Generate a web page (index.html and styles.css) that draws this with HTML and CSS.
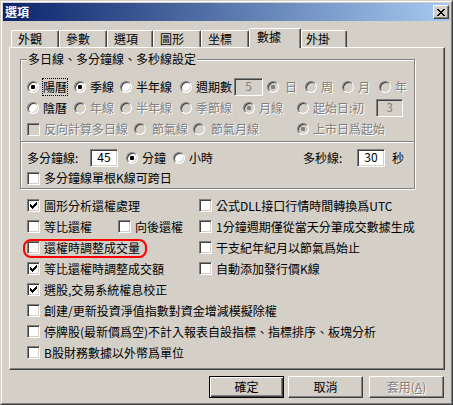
FILE: index.html
```html
<!DOCTYPE html>
<html lang="zh-Hant">
<head>
<meta charset="utf-8">
<title>選項</title>
<link rel="stylesheet" href="styles.css">
</head>
<body>
<div class="window">
  <div class="frame">
    <div class="titlebar">
      <span class="title">選項</span>
      <span class="close"><svg width="8" height="7" viewBox="0 0 8 7"><path fill="#000" d="M0 0h2v1H0zM6 0h2v1H6zM1 1h2v1H1zM5 1h2v1H5zM2 2h4v1H2zM3 3h2v1H3zM2 4h4v1H2zM1 5h2v1H1zM5 5h2v1H5zM0 6h2v1H0zM6 6h2v1H6z"/></svg></span>
    </div>

    <div class="tabs">
      <div class="tab t1">外觀</div>
      <div class="tab t2">參數</div>
      <div class="tab t3">選項</div>
      <div class="tab t4">圖形</div>
      <div class="tab t5">坐標</div>
      <div class="tab t6 sel">數據</div>
      <div class="tab t7">外掛</div>
    </div>

    <div class="panel">
      <fieldset class="group1">
        <legend>多日線、多分鐘線、多秒線設定</legend>
        <div class="row r21">
          <span class="opt w47"><i class="rb on"></i><span class="focus">陽曆</span></span>
          <span class="opt w46"><i class="rb on"></i><span>季線</span></span>
          <span class="opt w60"><i class="rb"></i><span>半年線</span></span>
          <span class="opt w54"><i class="rb"></i><span>週期數</span></span>
          <span class="field w29 dis gap4">5</span>
          <span class="opt w38 dis"><i class="rb on"></i><span class="far">日</span></span>
          <span class="opt w37 dis"><i class="rb"></i><span>周</span></span>
          <span class="opt w37 dis"><i class="rb"></i><span>月</span></span>
          <span class="opt dis"><i class="rb"></i><span>年</span></span>
        </div>
        <div class="row r21">
          <span class="opt w47"><i class="rb"></i><span>陰曆</span></span>
          <span class="opt w46 dis"><i class="rb"></i><span>年線</span></span>
          <span class="opt w60 dis"><i class="rb"></i><span>半年線</span></span>
          <span class="opt w63 dis"><i class="rb"></i><span>季節線</span></span>
          <span class="opt w54 dis"><i class="rb on"></i><span>月線</span></span>
          <span class="opt w79 dis"><i class="rb"></i><span>起始日:初</span></span>
          <span class="field w27 dis">3</span>
        </div>
        <div class="row r22">
          <span class="opt w107 dis"><i class="cb"></i><span>反向計算多日線</span></span>
          <span class="opt w59 dis"><i class="rb"></i><span class="far">節氣線</span></span>
          <span class="opt w104 dis"><i class="rb"></i><span class="far">節氣月線</span></span>
          <span class="opt dis"><i class="rb on"></i><span>上市日爲起始</span></span>
        </div>
      </fieldset>

      <div class="group2">
        <div class="row r21">
          <span class="lbl w63">多分鐘線:</span>
          <span class="field w28 gap8">45</span>
          <span class="opt w47"><i class="rb on"></i><span>分鐘</span></span>
          <span class="opt w130"><i class="rb"></i><span>小時</span></span>
          <span class="lbl w54">多秒線:</span>
          <span class="field w28 gap7">30</span>
          <span class="lbl">秒</span>
        </div>
        <div class="row r20">
          <span class="opt"><i class="cb"></i><span>多分鐘線單根K線可跨日</span></span>
        </div>
      </div>

      <div class="checks">
        <div class="row r21">
          <span class="opt w172"><i class="cb on"></i><span>圖形分析還權處理</span></span>
          <span class="opt"><i class="cb"></i><span>公式DLL接口行情時間轉換爲UTC</span></span>
        </div>
        <div class="row r21">
          <span class="opt w91"><i class="cb"></i><span>等比還權</span></span>
          <span class="opt w81"><i class="cb"></i><span>向後還權</span></span>
          <span class="opt"><i class="cb"></i><span>1分鐘週期僅從當天分筆成交數據生成</span></span>
        </div>
        <div class="row r21">
          <span class="opt w172 marked"><i class="cb"></i><span>還權時調整成交量</span></span>
          <span class="opt"><i class="cb"></i><span>干支紀年紀月以節氣爲始止</span></span>
        </div>
        <div class="row r21">
          <span class="opt w172"><i class="cb on"></i><span>等比還權時調整成交額</span></span>
          <span class="opt"><i class="cb"></i><span>自動添加發行價K線</span></span>
        </div>
        <div class="row r21">
          <span class="opt"><i class="cb on"></i><span>選股,交易系統權息校正</span></span>
        </div>
        <div class="row r21">
          <span class="opt"><i class="cb"></i><span>創建/更新投資淨值指數對資金增減模擬除權</span></span>
        </div>
        <div class="row r21">
          <span class="opt"><i class="cb"></i><span>停牌股(最新價爲空)不計入報表自設指標、指標排序、板塊分析</span></span>
        </div>
        <div class="row r21">
          <span class="opt"><i class="cb"></i><span>B股財務數據以外幣爲單位</span></span>
        </div>
      </div>
    </div>

    <div class="buttons">
      <span class="btn default">確定</span>
      <span class="btn">取消</span>
      <span class="btn disabled">套用(<u>A</u>)</span>
    </div>
  </div>
</div>
</body>
</html>
```

FILE: styles.css
```css
* { box-sizing: border-box; }
html, body { margin: 0; padding: 0; }
body {
  width: 453px;
  height: 405px;
  overflow: hidden;
  background: #d4d0c8;
  color: #000;
  font-family: "Noto Sans CJK TC", "Noto Sans CJK SC", "Liberation Sans", sans-serif;
  font-size: 12px;
  line-height: 14px;
}

.window {
  width: 453px;
  height: 405px;
  border: 1px solid;
  border-color: #d4d0c8 #404040 #404040 #d4d0c8;
}
.frame {
  height: 100%;
  border: 1px solid;
  border-color: #fff #808080 #808080 #fff;
  padding: 1px;
}

/* title bar */
.titlebar {
  height: 18px;
  display: flex;
  align-items: center;
  justify-content: space-between;
  padding: 0 1px 0 2px;
  background: linear-gradient(to right, #0a246a, #a6caf0);
}
.title { color: #fff; font-weight: bold; }
.close {
  width: 16px;
  height: 14px;
  display: flex;
  align-items: center;
  justify-content: center;
  background: #d4d0c8;
  border: 1px solid;
  border-color: #fff #404040 #404040 #fff;
  box-shadow: inset -1px -1px #808080;
}

/* tabs */
.tabs {
  display: flex;
  align-items: flex-end;
  height: 19px;
  margin-top: 7px;
  padding-left: 8px;
}
.tab {
  height: 17px;
  padding-left: 6px;
  line-height: 15px;
  border-top: 1px solid #fff;
  border-left: 1px solid #fff;
  border-right: 1px solid #404040;
  border-top-left-radius: 2px;
  border-top-right-radius: 2px;
  box-shadow: inset -1px 0 #808080;
}
.tab.sel {
  position: relative;
  z-index: 1;
  height: 20px;
  margin-bottom: -1px;
  padding-left: 7px;
  line-height: 16px;
  background: #d4d0c8;
}
.t1 { width: 48px; }
.t2 { width: 48px; }
.t3 { width: 46px; }
.t4 { width: 48px; }
.t5 { width: 48px; }
.t6 { width: 52px; }
.t7 { width: 46px; padding-left: 4px; }

/* panel */
.panel {
  width: 436px;
  height: 323px;
  margin-left: 6px;
  border-top: 1px solid #fff;
  border-left: 1px solid #fff;
  border-right: 1px solid #404040;
  border-bottom: 1px solid #404040;
  box-shadow: inset -1px -1px #808080;
  padding-top: 5px;
}

.group1 {
  width: 395px;
  margin: 0 0 0 10px;
  padding: 11px 0 1px 6px;
  border: 1px solid #808080;
  box-shadow: inset 1px 1px #fff, 1px 1px #fff;
  min-width: 0;
}
.group1 legend {
  padding: 0 1px;
  line-height: 12px;
  background: #d4d0c8;
}
.group2 {
  width: 395px;
  margin-left: 10px;
  padding: 5px 0 0 6px;
  border: 1px solid #808080;
  border-top: none;
  box-shadow: inset 1px 0 #fff, 1px 1px #fff;
}

.row { display: flex; align-items: stretch; }
.r20 { height: 20px; }
.r21 { height: 21px; }
.r22 { height: 22px; }

.opt, .lbl {
  display: flex;
  align-items: center;
  white-space: nowrap;
  flex: none;
}
.w27 { width: 27px; } .w28 { width: 28px; } .w29 { width: 29px; }
.w37 { width: 37px; } .w38 { width: 38px; } .w46 { width: 46px; }
.w47 { width: 47px; } .w54 { width: 54px; } .w59 { width: 59px; }
.w60 { width: 60px; } .w63 { width: 63px; } .w79 { width: 79px; }
.w81 { width: 81px; } .w91 { width: 91px; } .w104 { width: 104px; }
.w107 { width: 107px; } .w130 { width: 130px; } .w172 { width: 172px; }
.gap4 { margin-right: 4px; }
.gap7 { margin-right: 7px; }
.gap8 { margin-right: 8px; }
.far { margin-left: 2px; }

/* radio */
.rb {
  flex: none;
  width: 12px;
  height: 12px;
  margin-right: 4px;
  border-radius: 50%;
  border: 1px solid;
  border-color: #808080 #fff #fff #808080;
  box-shadow: inset 1px 1px #404040, inset -1px -1px #d4d0c8;
  background: #fff;
  display: flex;
  align-items: center;
  justify-content: center;
}
.rb.on::after {
  content: "";
  width: 4px;
  height: 4px;
  border-radius: 1px;
  background: #000;
}

/* checkbox */
.cb {
  flex: none;
  width: 13px;
  height: 13px;
  margin-right: 4px;
  border: 1px solid;
  border-color: #808080 #fff #fff #808080;
  box-shadow: inset 1px 1px #404040, inset -1px -1px #d4d0c8;
  background: #fff;
}
.cb.on {
  background: #fff url("data:image/svg+xml;utf8,<svg xmlns='http://www.w3.org/2000/svg' width='7' height='7' viewBox='0 0 7 7'><path fill='black' d='M6 0h1v1H6zM5 1h2v1H5zM0 2h1v1H0zM4 2h3v1H4zM0 3h2v1H0zM3 3h3v1H3zM0 4h5v1H0zM1 5h3v1H1zM2 6h1v1H2z'/></svg>") no-repeat 2px 2px;
}

/* disabled */
.dis { color: #808080; text-shadow: 1px 1px #fff; }
.dis .rb, .dis .cb { background: #d4d0c8; }
.dis .rb.on::after { background: #808080; }

/* focus rect */
.focus {
  margin-left: -1px;
  padding: 1px 0;
  border: 1px dotted #000;
}

/* edit field */
.field {
  flex: none;
  align-self: center;
  height: 18px;
  line-height: 14px;
  text-align: center;
  background: #fff;
  border: 1px solid;
  border-color: #808080 #fff #fff #808080;
  box-shadow: inset 1px 1px #404040, inset -1px -1px #d4d0c8;
}
.field.dis { background: #d4d0c8; text-shadow: none; }

/* checkbox list */
.checks { padding-left: 17px; margin-top: 6px; }
.marked { position: relative; }
.marked::after {
  content: "";
  position: absolute;
  left: -4px;
  top: 2px;
  width: 120px;
  height: 15px;
  border: 2px solid #f00;
  border-radius: 8px;
}

/* buttons */
.buttons {
  display: flex;
  margin: 6px 0 0 206px;
}
.btn {
  width: 75px;
  height: 22px;
  display: flex;
  align-items: center;
  justify-content: center;
  margin-right: 4px;
  border: 1px solid;
  border-color: #fff #404040 #404040 #fff;
  box-shadow: inset -1px -1px #808080;
}
.btn.default {
  border: 1px solid #000;
  box-shadow: inset 1px 1px #fff, inset -1px -1px #404040, inset -2px -2px #808080;
}
.btn:nth-child(2) { margin-right: 6px; }
.btn.disabled { color: #808080; text-shadow: 1px 1px #fff; }
.btn u { text-decoration: underline; }
```
